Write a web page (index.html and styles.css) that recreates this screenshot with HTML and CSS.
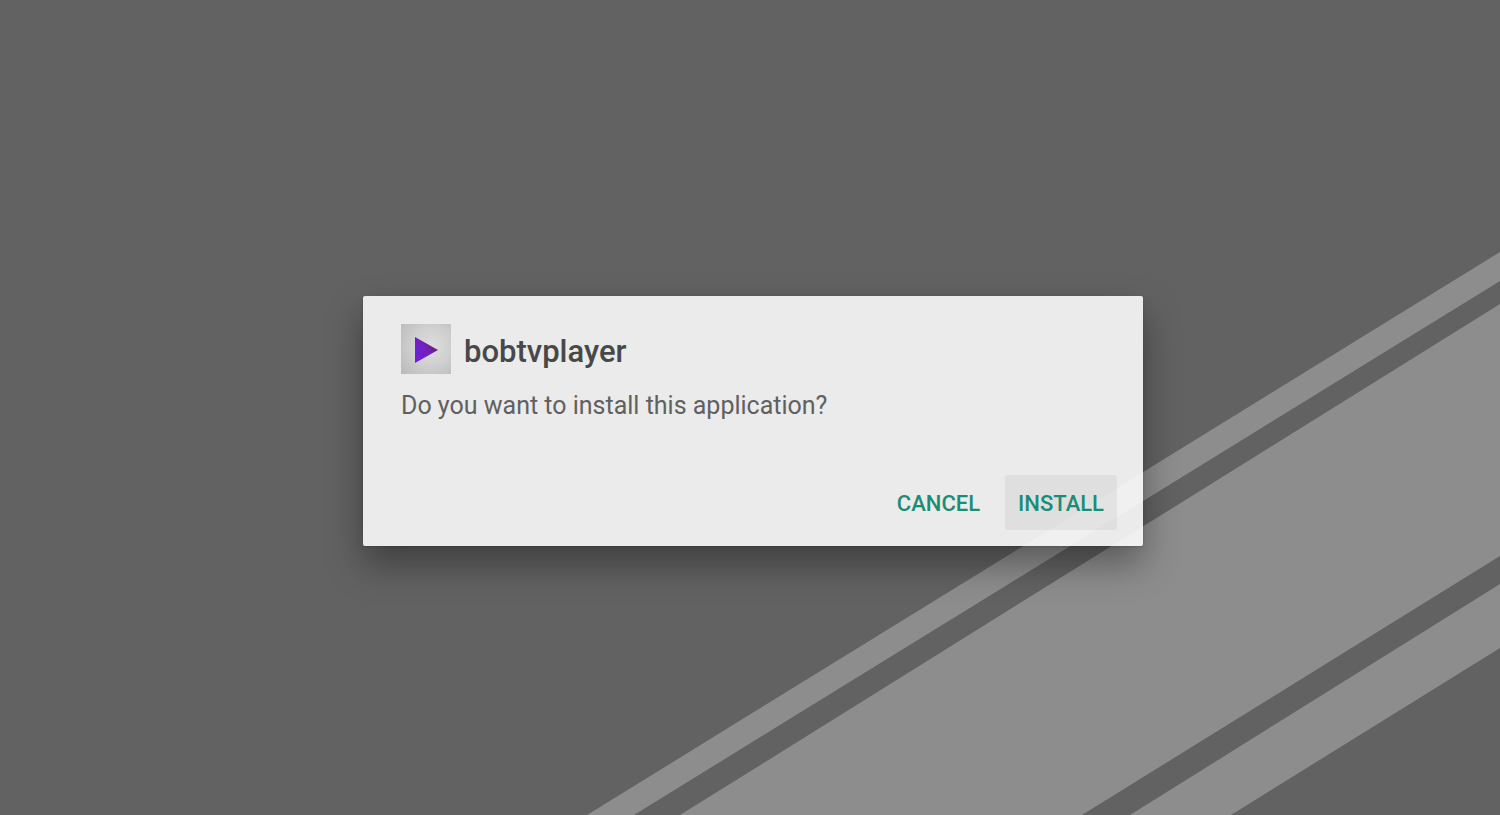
FILE: index.html
```html
<!DOCTYPE html>
<html lang="en">
<head>
<meta charset="UTF-8">
<meta name="viewport" content="width=device-width, initial-scale=1">
<title>bobtvplayer</title>
<link rel="stylesheet" href="styles.css">
</head>
<body>

<svg class="stripes" viewBox="0 0 1500 815" preserveAspectRatio="xMaxYMax slice" aria-hidden="true">
  <path d="M587 815L1500 252V281L634 815Z"/>
  <path d="M680 815L1500 304V556L1082 815Z"/>
  <path d="M1130 815L1500 584V648L1231 815Z"/>
</svg>

<main class="screen">
  <section class="dialog" role="dialog" aria-labelledby="appName" aria-describedby="question">
    <header class="dialog-header">
      <svg class="app-icon" viewBox="0 0 50 50" aria-hidden="true">
        <defs>
          <radialGradient id="tile" cx="0.6" cy="0.45" r="0.75">
            <stop offset="0" stop-color="#dedede"/>
            <stop offset="0.5" stop-color="#d0d0d0"/>
            <stop offset="1" stop-color="#bcbcbc"/>
          </radialGradient>
          <linearGradient id="play" x1="0.1" y1="0.7" x2="0.8" y2="0.2">
            <stop offset="0" stop-color="#6f1fd6"/>
            <stop offset="0.5" stop-color="#741fc0"/>
            <stop offset="1" stop-color="#68206e"/>
          </linearGradient>
        </defs>
        <rect width="50" height="50" fill="url(#tile)"/>
        <path d="M14 13L37 26L14 39Z" fill="url(#play)"/>
      </svg>
      <h1 class="app-name" id="appName">bobtvplayer</h1>
    </header>
    <p class="question" id="question">Do you want to install this application?</p>
    <div class="actions">
      <button type="button" class="btn">CANCEL</button>
      <button type="button" class="btn btn-focused">INSTALL</button>
    </div>
  </section>
</main>

</body>
</html>
```
FILE: styles.css
```css
* {
  box-sizing: border-box;
}
body {
  margin: 0;
  background: #626262;
  color: #484848;
  font-family: Roboto, "Liberation Sans", sans-serif;
}
.stripes {
  position: absolute;
  inset: 0;
  width: 100%;
  height: 100%;
  fill: #8d8d8d;
}
.screen {
  position: relative;
  display: flex;
  align-items: center;
  justify-content: center;
  min-height: 100vh;
  padding: 27px 0 0 6px;
}
.dialog {
  width: 52vw;
  min-width: 520px;
  padding: 28px 26px 16px 38px;
  background: rgba(254, 254, 254, 0.88);
  border-radius: 2px;
  box-shadow: 0 18px 36px rgba(0, 0, 0, 0.36), 0 1px 3px rgba(0, 0, 0, 0.16);
}
.dialog-header {
  display: flex;
  align-items: center;
  gap: 13px;
}
.app-icon {
  width: 50px;
  height: 50px;
}
.app-name {
  margin: 0;
  padding-top: 6px;
  font-size: 31px;
  line-height: 36px;
  font-weight: 500;
}
.question {
  margin: 16px 0 54px;
  color: #606060;
  font-size: 25px;
  line-height: 31px;
}
.actions {
  display: flex;
  justify-content: flex-end;
  gap: 12px;
}
.btn {
  height: 55px;
  padding: 2px 13px 0;
  border: none;
  border-radius: 3px;
  background: none;
  color: #1a8d76;
  font-family: inherit;
  font-size: 22px;
  font-weight: 500;
  cursor: pointer;
}
.btn-focused {
  background: rgba(0, 0, 0, 0.05);
}
```
